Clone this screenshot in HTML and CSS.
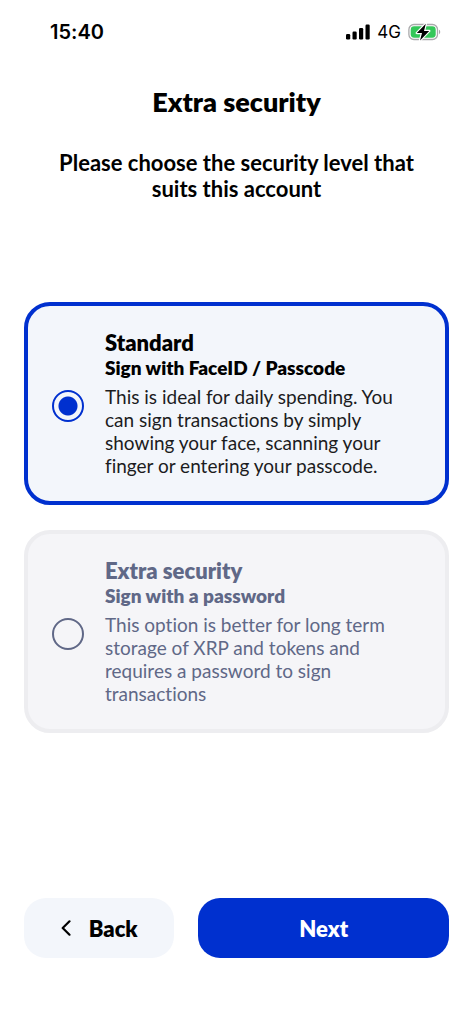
FILE: index.html
```html
<!DOCTYPE html>
<html lang="en">
<head>
<meta charset="utf-8">
<meta name="viewport" content="width=device-width, initial-scale=1">
<title>Extra security</title>
<link rel="stylesheet" href="styles.css">
</head>
<body>
<div class="screen">
  <div class="status">
    <span class="time">15:40</span>
    <div class="indicators">
      <svg class="signal" width="24" height="16" viewBox="0 0 24 16" aria-hidden="true">
        <rect x="0" y="10" width="4.200" height="5.500" rx="1.200"/>
        <rect x="6.500" y="7.500" width="4.200" height="8" rx="1.200"/>
        <rect x="13" y="4" width="4.200" height="11.500" rx="1.200"/>
        <rect x="19.500" y="0.500" width="4.200" height="15" rx="1.200"/>
      </svg>
      <span class="network">4G</span>
      <svg class="battery" width="33" height="18" viewBox="0 0 33 18" aria-hidden="true">
        <rect x="0.900" y="1.500" width="28.600" height="15" rx="5" fill="#fff" stroke="#a9a9ab" stroke-width="1.300"/>
        <path d="M31 6.800c1.600.5 1.600 3.900 0 4.400z" fill="#a9a9ab"/>
        <rect x="2.700" y="3.300" width="25" height="11.400" rx="3.400" fill="#34c759"/>
        <path d="M17.800.8 8.800 10h5.200l-2 7.400 9.200-9.500h-5.200z" fill="#000" stroke="#fff" stroke-width="2.400" paint-order="stroke" stroke-linejoin="round"/>
      </svg>
    </div>
  </div>

  <header class="header">
    <h1 class="title">Extra security</h1>
    <p class="lead">Please choose the security level that suits this account</p>
  </header>

  <form class="form">
    <div class="options">
      <label class="option">
        <input class="radio" type="radio" name="level" value="standard" checked>
        <span class="option-text">
          <span class="option-title">Standard</span>
          <span class="option-subtitle">Sign with FaceID / Passcode</span>
          <span class="option-body">This is ideal for daily spending. You<br>can sign transactions by simply<br>showing your face, scanning your<br>finger or entering your passcode.</span>
        </span>
      </label>
      <label class="option">
        <input class="radio" type="radio" name="level" value="extra">
        <span class="option-text">
          <span class="option-title">Extra security</span>
          <span class="option-subtitle">Sign with a password</span>
          <span class="option-body">This option is better for long term<br>storage of XRP and tokens and<br>requires a password to sign<br>transactions</span>
        </span>
      </label>
    </div>

    <div class="actions">
      <button class="button back" type="button">
        <svg width="10" height="16" viewBox="0 0 10 16" aria-hidden="true">
          <path d="M8.500 1.300 1.700 8l6.800 6.700" fill="none" stroke="#000" stroke-width="2.200" stroke-linecap="round" stroke-linejoin="round"/>
        </svg>
        Back
      </button>
      <button class="button next" type="submit">Next</button>
    </div>
  </form>
</div>
</body>
</html>
```
FILE: styles.css
```css
* {
  box-sizing: border-box;
}

body {
  margin: 0;
  background: #fff;
  color: #000;
  font-family: Lato, "Open Sans", sans-serif;
  font-variant-ligatures: none;
}

.screen {
  display: flex;
  flex-direction: column;
  min-height: 100vh;
  padding: 0 24px 66px;
}

.status {
  display: flex;
  align-items: center;
  justify-content: space-between;
  height: 64px;
  padding: 0 8px 0 26px;
  font-family: Inter, "Liberation Sans", sans-serif;
}

.time {
  font-size: 20px;
  font-weight: 600;
}

.indicators {
  display: flex;
  align-items: center;
  gap: 7px;
}

.network {
  font-size: 17px;
}

.header {
  padding: 20px 24px 0;
  text-align: center;
}

.title {
  margin: 0;
  font-size: 27px;
  font-weight: 800;
  line-height: 36px;
}

.lead {
  margin: 30px 0 0;
  font-size: 22px;
  font-weight: 700;
  line-height: 26px;
}

.form {
  display: flex;
  flex: 1;
  flex-direction: column;
  justify-content: space-between;
  padding-top: 100px;
}

.options {
  display: grid;
  gap: 25px;
}

.option {
  display: flex;
  align-items: center;
  gap: 21px;
  padding: 24px;
  border: 4px solid #ededf0;
  border-radius: 26px;
  background: #f5f5f8;
  color: #606887;
}

.option:has(:checked) {
  border-color: #0030cf;
  background: #f3f6fb;
  color: #000;
}

.radio {
  flex: none;
  width: 32px;
  height: 32px;
  margin: 5px 0 0;
  appearance: none;
  border: 2px solid #606887;
  border-radius: 50%;
}

.radio:checked {
  border-color: #0030cf;
  background: radial-gradient(circle, #0030cf 9px, transparent 10px);
}

.option-text {
  display: flex;
  flex-direction: column;
}

.option-title {
  font-size: 22px;
  font-weight: 800;
  line-height: 26px;
}

.option-subtitle {
  font-size: 19px;
  font-weight: 800;
  line-height: 24px;
}

.option-body {
  margin-top: 5px;
  font-size: 19px;
  line-height: 23px;
}

.option:has(:checked) .option-body {
  color: #1c1c1e;
}

.actions {
  display: grid;
  grid-template-columns: 3fr 5fr;
  gap: 24px;
}

.button {
  display: flex;
  align-items: center;
  justify-content: center;
  gap: 18px;
  height: 60px;
  padding: 0;
  border: 0;
  border-radius: 22px;
  font-family: inherit;
  font-size: 22px;
  font-weight: 800;
}

.back {
  background: #f3f6fb;
  color: #000;
}

.next {
  background: #0030cf;
  color: #fff;
}
```
